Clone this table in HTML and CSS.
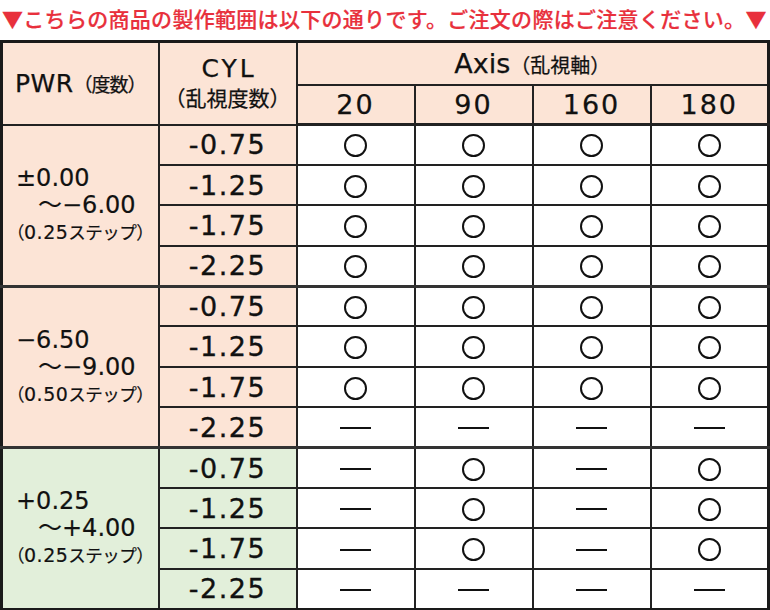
FILE: index.html
```html
<!DOCTYPE html>
<html lang="ja">
<head>
<meta charset="utf-8">
<link rel="stylesheet" href="styles.css">
</head>
<body>
<div class="banner">▼こちらの商品の製作範囲は以下の通りです。ご注文の際はご注意ください。▼</div>
<table class="spec">
  <colgroup>
    <col class="c-pwr"><col class="c-cyl"><col class="c-ax"><col class="c-ax"><col class="c-ax"><col class="c-ax">
  </colgroup>
  <thead>
    <tr class="h1">
      <th rowspan="2" class="hd"><span class="big">PWR</span><span class="small">（度数）</span></th>
      <th rowspan="2" class="hd"><span class="cylh">CYL</span><br><span class="small2">（乱視度数）</span></th>
      <th colspan="4" class="hd"><span class="axis">Axis</span><span class="small-ax">（乱視軸）</span></th>
    </tr>
    <tr class="h2">
      <th class="hd num">20</th><th class="hd num">90</th><th class="hd num">160</th><th class="hd num">180</th>
    </tr>
  </thead>
  <tbody class="grp pink">
    <tr><td rowspan="4" class="pwr"><div class="l1">±0.00</div><div class="l2">～−6.00</div><div class="l3">（<span class="sd">0.25</span>ステップ）</div></td><td class="cyl">-0.75</td><td><i class="o"></i></td><td><i class="o"></i></td><td><i class="o"></i></td><td><i class="o"></i></td></tr>
    <tr><td class="cyl">-1.25</td><td><i class="o"></i></td><td><i class="o"></i></td><td><i class="o"></i></td><td><i class="o"></i></td></tr>
    <tr><td class="cyl">-1.75</td><td><i class="o"></i></td><td><i class="o"></i></td><td><i class="o"></i></td><td><i class="o"></i></td></tr>
    <tr><td class="cyl">-2.25</td><td><i class="o"></i></td><td><i class="o"></i></td><td><i class="o"></i></td><td><i class="o"></i></td></tr>
  </tbody>
  <tbody class="grp pink">
    <tr><td rowspan="4" class="pwr"><div class="l1">−6.50</div><div class="l2">～−9.00</div><div class="l3">（<span class="sd">0.50</span>ステップ）</div></td><td class="cyl">-0.75</td><td><i class="o"></i></td><td><i class="o"></i></td><td><i class="o"></i></td><td><i class="o"></i></td></tr>
    <tr><td class="cyl">-1.25</td><td><i class="o"></i></td><td><i class="o"></i></td><td><i class="o"></i></td><td><i class="o"></i></td></tr>
    <tr><td class="cyl">-1.75</td><td><i class="o"></i></td><td><i class="o"></i></td><td><i class="o"></i></td><td><i class="o"></i></td></tr>
    <tr><td class="cyl">-2.25</td><td><i class="d"></i></td><td><i class="d"></i></td><td><i class="d"></i></td><td><i class="d"></i></td></tr>
  </tbody>
  <tbody class="grp green">
    <tr><td rowspan="4" class="pwr"><div class="l1">+0.25</div><div class="l2">～+4.00</div><div class="l3">（<span class="sd">0.25</span>ステップ）</div></td><td class="cyl">-0.75</td><td><i class="d"></i></td><td><i class="o"></i></td><td><i class="d"></i></td><td><i class="o"></i></td></tr>
    <tr><td class="cyl">-1.25</td><td><i class="d"></i></td><td><i class="o"></i></td><td><i class="d"></i></td><td><i class="o"></i></td></tr>
    <tr><td class="cyl">-1.75</td><td><i class="d"></i></td><td><i class="o"></i></td><td><i class="d"></i></td><td><i class="o"></i></td></tr>
    <tr><td class="cyl">-2.25</td><td><i class="d"></i></td><td><i class="d"></i></td><td><i class="d"></i></td><td><i class="d"></i></td></tr>
  </tbody>
</table>
</body>
</html>
```
FILE: styles.css
```css
html, body {
  margin: 0;
  padding: 0;
  background: #fff;
}
body {
  width: 770px;
  font-family: "DejaVu Sans", "Noto Sans CJK JP", sans-serif;
  color: #111;
}
.banner {
  height: 40px;
  line-height: 36px;
  padding-left: 2px;
  font-family: "Noto Sans CJK JP", sans-serif;
  font-size: 21px;
  font-weight: 500;
  letter-spacing: 0.3px;
  -webkit-text-stroke: 0.2px #e8303c;
  color: #e8303c;
  white-space: nowrap;
  overflow: hidden;
}
.spec {
  width: 769px;
  border-collapse: collapse;
  table-layout: fixed;
  border: 3px solid #1a1a1a;
}
.c-pwr { width: 157px; }
.c-cyl { width: 138px; }
.c-ax { width: 118px; }
.spec th, .spec td {
  border: 2px solid #222;
  padding: 0;
  text-align: center;
  vertical-align: middle;
}
.hd {
  background: #fce4d6;
  font-weight: normal;
  -webkit-text-stroke: 0.25px #111;
}
.h1 { height: 43px; }
.h2 { height: 40px; }
.h1 th:first-child { padding-top: 2px; }
.big {
  font-size: 25px;
  line-height: 28px;
  letter-spacing: 0.5px;
}
.cylh {
  font-size: 25px;
  line-height: 28px;
  letter-spacing: 3px;
  padding-left: 3px;
}
.axis {
  font-size: 27px;
}
.small {
  font-family: "Noto Sans CJK JP", sans-serif;
  font-size: 19px;
  letter-spacing: -1px;
}
.small-ax {
  font-family: "Noto Sans CJK JP", sans-serif;
  font-size: 20px;
  letter-spacing: 0;
}
.small2 {
  font-family: "Noto Sans CJK JP", sans-serif;
  font-size: 21px;
  line-height: 28px;
  letter-spacing: 0;
}
.num {
  font-size: 27px;
  letter-spacing: 2px;
}
thead tr:last-child th { border-bottom: 3px solid #222; }
.grp + .grp tr:first-child td { border-top: 3px solid #333; }
.spec tbody tr { height: 40.4px; }
.pink .pwr, .pink .cyl { background: #fce4d6; }
.green .pwr, .green .cyl { background: #e2efda; }
.cyl {
  font-size: 27px;
  letter-spacing: 1.5px;
  -webkit-text-stroke: 0.35px #111;
  padding-top: 2px;
}
.pwr {
  text-align: left !important;
  padding-bottom: 4px;
  -webkit-text-stroke: 0.2px #111;
}
.pwr .l1, .pwr .l2 {
  font-size: 24px;
  line-height: 27px;
}
.pwr .l1 { padding-left: 13px; }
.pwr .l2 { padding-left: 35px; }
.pwr .l3 {
  font-family: "Noto Sans CJK JP", sans-serif;
  font-size: 17.5px;
  line-height: 26px;
  padding-left: 4px;
  letter-spacing: -0.5px;
  white-space: nowrap;
}
.pwr .sd {
  font-family: "DejaVu Sans", sans-serif;
  font-size: 19px;
  letter-spacing: 0.5px;
}
i { display: inline-block; vertical-align: middle; }
.o {
  width: 19px;
  height: 19px;
  border: 2px solid #111;
  border-radius: 50%;
  margin-top: 2px;
}
.d {
  width: 31px;
  height: 2px;
  background: #111;
}
```
